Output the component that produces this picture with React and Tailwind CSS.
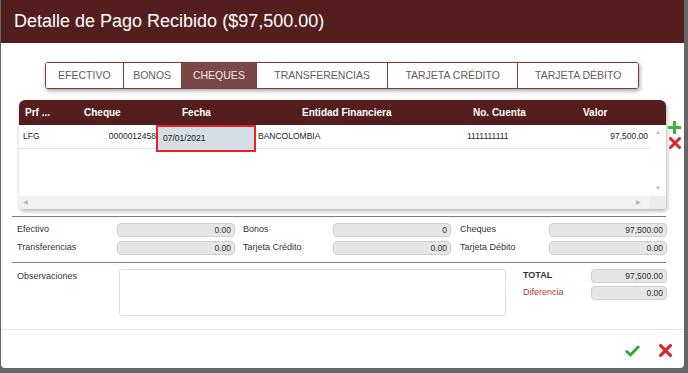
const tabs = [
  { label: "EFECTIVO", w: "w-[77px]" },
  { label: "BONOS", w: "w-[58px]" },
  { label: "CHEQUES", w: "w-[76px]", active: true },
  { label: "TRANSFERENCIAS", w: "w-[131px]" },
  { label: "TARJETA CRÉDITO", w: "w-[131px]" },
  { label: "TARJETA DÉBITO", w: "w-[121px]" },
];

const PlusIcon = () => (
  <svg width="13" height="13" viewBox="0 0 13 13">
    <path d="M5 0h3v5h5v3H8v5H5V8H0V5h5z" fill="#3cb43c" />
  </svg>
);

const XIcon = ({ size = 12 }) => (
  <svg width={size} height={size} viewBox="0 0 12 12">
    <path d="M1.5 1.5L10.5 10.5M10.5 1.5L1.5 10.5" stroke="#d8262b" strokeWidth="3" strokeLinecap="round" />
  </svg>
);

const CheckIcon = () => (
  <svg width="15" height="12" viewBox="0 0 15 12">
    <path d="M1.8 6.5L5.5 10L13.2 2" stroke="#3aa83a" strokeWidth="3" fill="none" strokeLinecap="round" strokeLinejoin="round" />
  </svg>
);

const Box = ({ value, w = "w-[118px]" }) => (
  <div className={`${w} h-[14px] bg-[#e6e6e6] border border-[#cfcfcf] rounded-[4px] flex items-center justify-end pr-[3px] text-[8.5px] text-[#333]`}>
    {value}
  </div>
);

const Label = ({ children, w, className = "" }) => (
  <div className={`${w} text-[9px] text-[#333] ${className}`}>{children}</div>
);

export default function App() {
  return (
    <div
      className="w-[688px] h-[373px] bg-[#666666] pl-px pr-[4px] pb-[5px] flex"
      style={{ fontFamily: '"Liberation Sans", Arial, sans-serif' }}
    >
      <div className="flex-1 bg-white rounded-b-[4px] flex flex-col overflow-hidden">
        {/* header */}
        <div className="h-[43px] bg-[#541e1e] flex items-center pl-[13px] text-white text-[18px]">
          Detalle de Pago Recibido ($97,500.00)
        </div>

        {/* tabs */}
        <div className="mt-[19px] ml-[44px] w-[594px] h-[27px] flex border border-[#7a3c3c] rounded-[3px] shadow-[1px_2px_4px_rgba(0,0,0,0.35)] overflow-hidden">
          {tabs.map((t, i) => (
            <div
              key={t.label}
              className={`${t.w} flex items-center justify-center text-[10.5px] ${
                i > 0 ? "border-l border-[#7a3c3c]" : ""
              } ${t.active ? "bg-[#7b4848] text-[#f3e6e6]" : "bg-white text-[#6a5a5a]"}`}
            >
              {t.label}
            </div>
          ))}
        </div>

        {/* grid */}
        <div className="mt-[11px] ml-[18px] flex items-start">
          <div className="w-[647px] rounded-t-[6px] rounded-b-[3px] shadow-[1px_2px_4px_rgba(0,0,0,0.3)] overflow-hidden bg-white">
            <div className="h-[25px] bg-[#541e1e] flex items-center text-white text-[10px] font-bold">
              <div className="w-[58px] pl-[6px]">Prf ...</div>
              <div className="w-[79px] pl-[7px]">Cheque</div>
              <div className="w-[100px] pl-[26px]">Fecha</div>
              <div className="w-[190px] pl-[46px]">Entidad Financiera</div>
              <div className="w-[114px] pl-[27px]">No. Cuenta</div>
              <div className="w-[90px] pl-[23px]">Valor</div>
            </div>
            <div className="flex">
              <div className="w-[631px] h-[71px]">
                <div className="h-[24px] flex items-center border-b border-[#dde6ee] text-[8.5px] text-[#222]">
                  <div className="w-[58px] pl-[4px]">LFG</div>
                  <div className="w-[79px] text-right overflow-hidden whitespace-nowrap">0000012458</div>
                  <div className="w-[100px] h-[27px] -mb-[3px] self-start border-[2px] border-[#e8202a] bg-[#d3dfe4] flex items-center pl-[5px]">
                    07/01/2021
                  </div>
                  <div className="w-[190px] pl-[2px]">BANCOLOMBIA</div>
                  <div className="w-[114px] pl-[21px]">1111111111</div>
                  <div className="w-[90px] text-right pr-[2px]">97,500.00</div>
                </div>
              </div>
              <div className="w-[16px] h-[71px] bg-white flex flex-col items-center justify-between py-[3px] text-[6px] text-[#b5b5b5]">
                <span>▲</span>
                <span>▼</span>
              </div>
            </div>
            <div className="flex h-[13px]">
              <div className="w-[631px] bg-[#f1f1f1] flex items-center pl-[4px] text-[6px] text-[#b5b5b5]">◀</div>
              <div className="w-[16px] bg-[#ececec] flex items-center text-[6px] text-[#b5b5b5]">
                <span className="-ml-[14px]">▶</span>
              </div>
            </div>
          </div>
          <div className="ml-[2px] mt-[21px] flex flex-col items-center gap-[3px]">
            <PlusIcon />
            <XIcon size={12} />
          </div>
        </div>

        <div className="mt-[7px] ml-[11px] w-[654px] h-px bg-[#a07070]" />

        {/* totals */}
        <div className="mt-[6px] ml-[16px] flex flex-col gap-[4px]">
          <div className="flex items-center">
            <Label w="w-[100px]">Efectivo</Label>
            <Box value="0.00" />
            <Label w="w-[98px]" className="pl-[8px]">Bonos</Label>
            <Box value="0" />
            <Label w="w-[98px]" className="pl-[9px]">Cheques</Label>
            <Box value="97,500.00" />
          </div>
          <div className="flex items-center">
            <Label w="w-[100px]">Transferencias</Label>
            <Box value="0.00" />
            <Label w="w-[98px]" className="pl-[8px]">Tarjeta Crédito</Label>
            <Box value="0.00" />
            <Label w="w-[98px]" className="pl-[9px]">Tarjeta Débito</Label>
            <Box value="0.00" />
          </div>
        </div>

        <div className="mt-[7px] ml-[11px] w-[654px] h-px bg-[#a07070]" />

        {/* observations */}
        <div className="mt-[6px] ml-[16px] flex items-start">
          <Label w="w-[102px]" className="pt-[1px]">Observaciones</Label>
          <div className="w-[387px] h-[47px] border border-[#dcdcdc] rounded-[3px]" />
          <div className="ml-[17px] flex flex-col gap-[3px]">
            <div className="flex items-center">
              <div className="w-[68px] text-[9px] font-bold text-[#333]">TOTAL</div>
              <Box value="97,500.00" w="w-[76px]" />
            </div>
            <div className="flex items-center">
              <div className="w-[68px] text-[9px] text-[#b03a3a]">Diferencia</div>
              <Box value="0.00" w="w-[76px]" />
            </div>
          </div>
        </div>

        <div className="mt-[13px] h-px bg-[#e8e8e8]" />

        <div className="flex justify-end items-center gap-[19px] pr-[12px] mt-[14px]">
          <CheckIcon />
          <XIcon size={13} />
        </div>
      </div>
    </div>
  );
}
